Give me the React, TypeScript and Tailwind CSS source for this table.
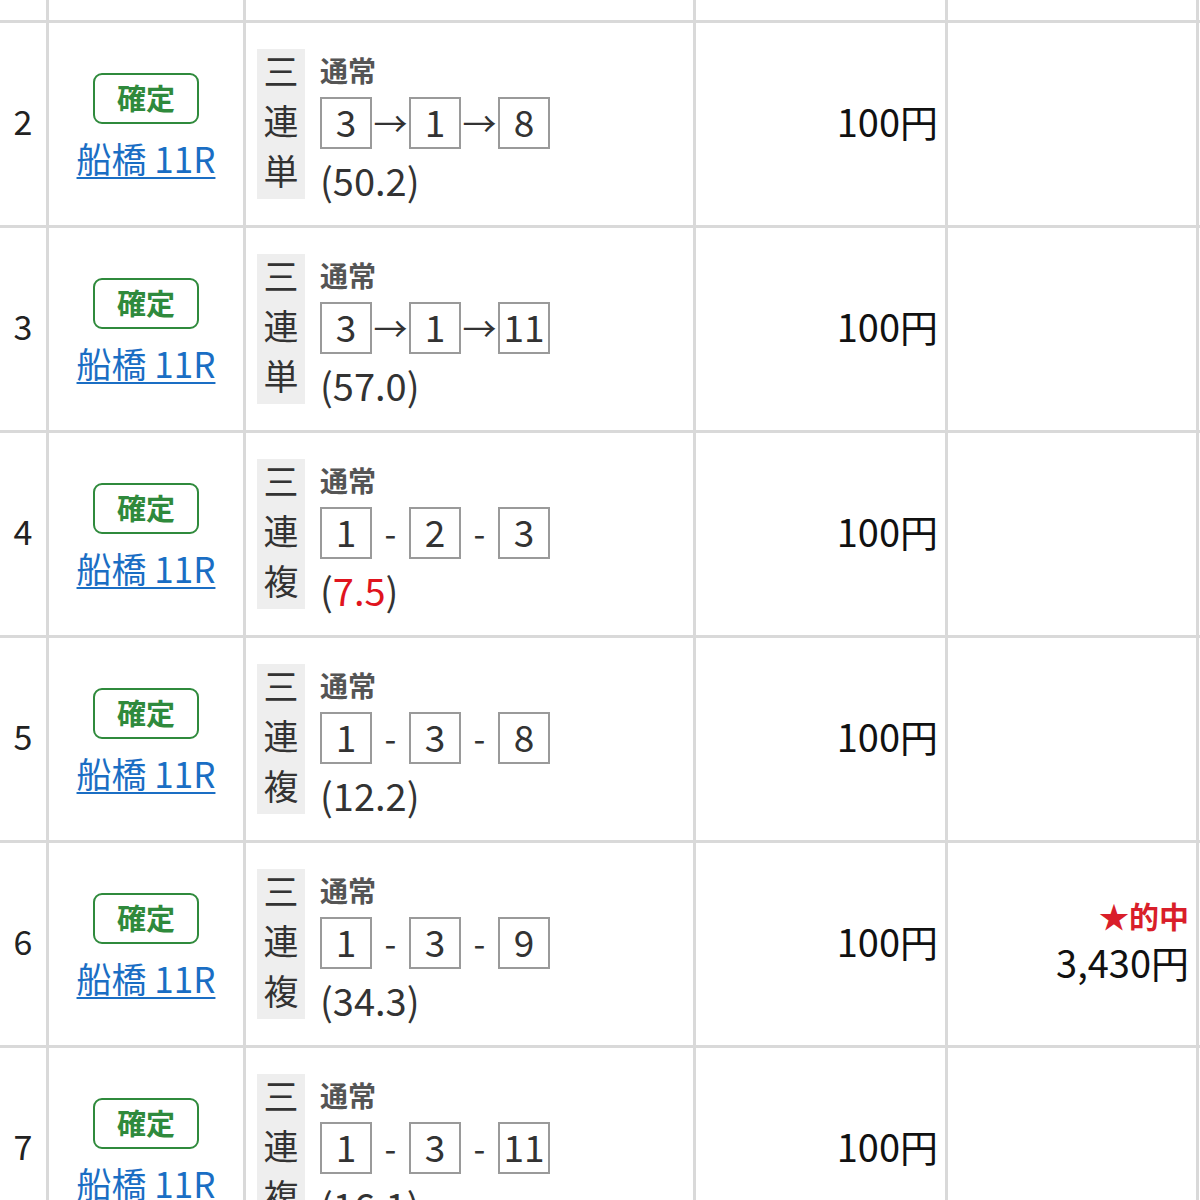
import React from "react";

type Row = {
  no: string;
  kind: string[];
  nums: string[];
  sep: "→" | "-";
  odds: string;
  oddsRed?: boolean;
  hit?: string;
};

const rows: Row[] = [
  { no: "2", kind: ["三", "連", "単"], nums: ["3", "1", "8"], sep: "→", odds: "50.2" },
  { no: "3", kind: ["三", "連", "単"], nums: ["3", "1", "11"], sep: "→", odds: "57.0" },
  { no: "4", kind: ["三", "連", "複"], nums: ["1", "2", "3"], sep: "-", odds: "7.5", oddsRed: true },
  { no: "5", kind: ["三", "連", "複"], nums: ["1", "3", "8"], sep: "-", odds: "12.2" },
  { no: "6", kind: ["三", "連", "複"], nums: ["1", "3", "9"], sep: "-", odds: "34.3", hit: "3,430円" },
  { no: "7", kind: ["三", "連", "複"], nums: ["1", "3", "11"], sep: "-", odds: "16.1" },
];

function Cells({ children, h }: { children?: React.ReactNode[]; h: string }) {
  const c = children || [null, null, null, null, null];
  return (
    <div className={`flex ${h} border-b-[3px] border-[#d9d9d9]`}>
      <div className="w-[49px] shrink-0 border-r-[3px] border-[#d9d9d9] flex items-center justify-center pb-[6px]">{c[0]}</div>
      <div className="w-[197px] shrink-0 border-r-[3px] border-[#d9d9d9]">{c[1]}</div>
      <div className="w-[450px] shrink-0 border-r-[3px] border-[#d9d9d9] flex items-center">{c[2]}</div>
      <div className="w-[252px] shrink-0 border-r-[3px] border-[#d9d9d9] flex items-center justify-end pr-[7px] pb-[7px]">{c[3]}</div>
      <div className="w-[251px] shrink-0 border-r-[3px] border-[#d9d9d9] flex flex-col items-end justify-center pr-[7px] pb-[8px]">{c[4]}</div>
    </div>
  );
}

function BetRow({ r }: { r: Row }) {
  return (
    <Cells h="h-[205px]">
      {[
        <span key="a" className="text-[34px] text-[#222] leading-none">{r.no}</span>,
        <div key="b" className="flex flex-col items-center pt-[50px]">
          <div className="w-[106px] h-[51px] border-2 border-[#2f8a3c] rounded-[9px] flex items-center justify-center text-[29px] font-bold text-[#2f8a3c] leading-none pb-[2px]">
            確定
          </div>
          <a className="mt-[12px] text-[35px] leading-[44px] text-[#1a6ec4] underline decoration-2 underline-offset-[4px] whitespace-nowrap">
            船橋 11R
          </a>
        </div>,
        <div key="c" className="flex items-start pl-[11px]">
          <div className="w-[48px] h-[150px] bg-[#eeeeee] flex flex-col items-center text-[35px] text-[#333]">
            {r.kind.map((k, i) => (
              <span key={i} className="h-[50px] leading-[42px]">{k}</span>
            ))}
          </div>
          <div className="ml-[15px] flex flex-col">
            <div className="h-[44px] leading-[42px] text-[28px] font-bold text-[#555]">通常</div>
            <div className="mt-[4px] flex items-center">
              {r.nums.map((n, i) => (
                <React.Fragment key={i}>
                  {i > 0 && (
                    <span className="w-[37px] text-center text-[34px] leading-none text-[#333]">{r.sep}</span>
                  )}
                  <span className="w-[52px] h-[52px] border-2 border-[#9a9a9a] flex items-center justify-center text-[37px] leading-none text-[#333] pb-[2px]">
                    {n}
                  </span>
                </React.Fragment>
              ))}
            </div>
            <div className="mt-[11px] h-[40px] leading-[40px] text-[38px] text-[#333] whitespace-nowrap">
              (<span className={r.oddsRed ? "text-[#e0141e]" : ""}>{r.odds}</span>)
            </div>
          </div>
        </div>,
        <span key="d" className="text-[38px] leading-none text-[#111]">100円</span>,
        r.hit ? (
          <React.Fragment key="e">
            <span className="text-[30px] font-bold leading-[32px] text-[#d91e2a]">★的中</span>
            <span className="mt-[12px] text-[38px] leading-[38px] text-[#111]">{r.hit}</span>
          </React.Fragment>
        ) : null,
      ]}
    </Cells>
  );
}

export default function App() {
  return (
    <div
      className="w-[1200px] h-[1200px] overflow-hidden bg-white"
      style={{ fontFamily: '"Noto Sans CJK JP", "Noto Sans", sans-serif' }}
    >
      <Cells h="h-[23px]" />
      {rows.map((r) => (
        <BetRow key={r.no} r={r} />
      ))}
    </div>
  );
}
